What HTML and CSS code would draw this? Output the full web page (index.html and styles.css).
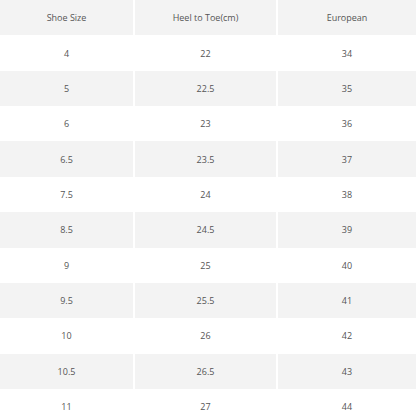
FILE: index.html
```html
<!DOCTYPE html>
<html>
<head>
<meta charset="utf-8">
<link rel="stylesheet" href="styles.css">
</head>
<body>
<div class="size-table">
  <div class="cell head">Shoe Size</div><div class="cell head">Heel to Toe(cm)</div><div class="cell head">European</div>
  <div class="cell">4</div><div class="cell">22</div><div class="cell">34</div>
  <div class="cell alt">5</div><div class="cell alt">22.5</div><div class="cell alt">35</div>
  <div class="cell">6</div><div class="cell">23</div><div class="cell">36</div>
  <div class="cell alt">6.5</div><div class="cell alt">23.5</div><div class="cell alt">37</div>
  <div class="cell">7.5</div><div class="cell">24</div><div class="cell">38</div>
  <div class="cell alt">8.5</div><div class="cell alt">24.5</div><div class="cell alt">39</div>
  <div class="cell">9</div><div class="cell">25</div><div class="cell">40</div>
  <div class="cell alt">9.5</div><div class="cell alt">25.5</div><div class="cell alt">41</div>
  <div class="cell">10</div><div class="cell">26</div><div class="cell">42</div>
  <div class="cell alt">10.5</div><div class="cell alt">26.5</div><div class="cell alt">43</div>
  <div class="cell">11</div><div class="cell">27</div><div class="cell">44</div>
</div>
</body>
</html>
```
FILE: styles.css
```css
html, body {
  margin: 0;
  padding: 0;
  background: #fff;
}
.size-table {
  display: grid;
  grid-template-columns: 133px 141px 138px;
  grid-auto-rows: 35.36px;
  column-gap: 2px;
  font-family: "Open Sans", sans-serif;
  font-size: 9px;
  color: #555;
}
.cell {
  display: flex;
  align-items: center;
  justify-content: center;
}
.head, .alt {
  background: #f3f3f3;
}
```
